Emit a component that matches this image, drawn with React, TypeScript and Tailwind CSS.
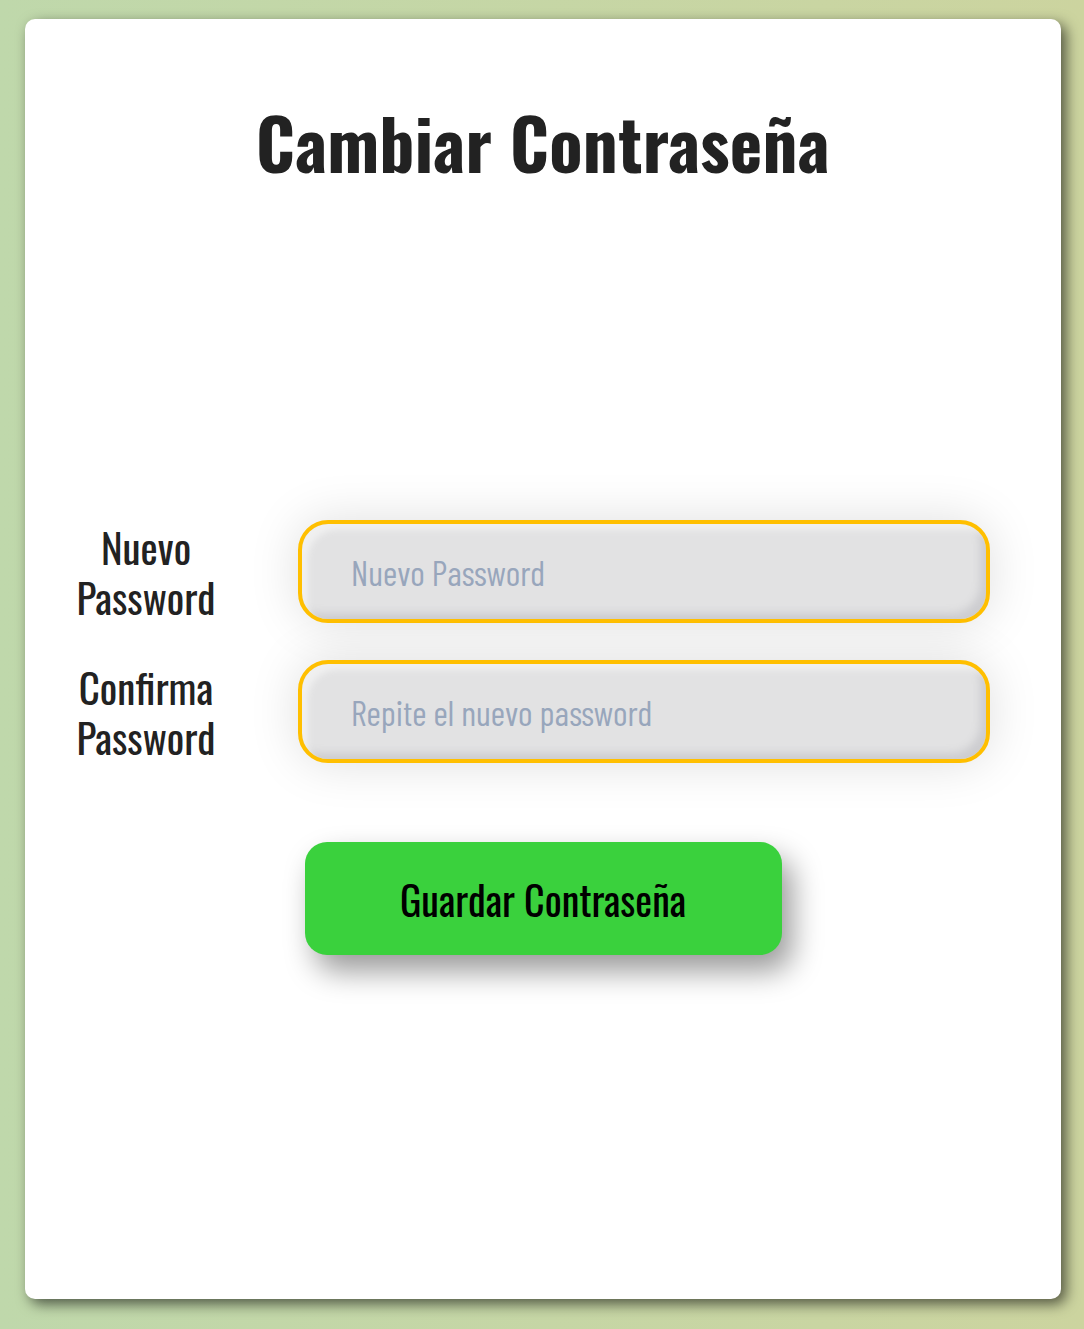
export default function App() {
  return (
    <div className="min-h-screen w-full bg-linear-to-r from-[#bfd8ab] to-[#ccd49f] pt-[19px] pl-[25px]">
      <div className="w-[1036px] h-[1280px] bg-white rounded-[10px] shadow-[5px_5px_14px_rgba(0,0,0,0.6)] flex flex-col items-center">
        <h1 className="mt-[78px] text-[69px] leading-[90px] font-bold text-[#222222] font-['Oswald',sans-serif] tracking-[0.3px]">
          Cambiar Contraseña
        </h1>

        <form className="mt-[333px] w-full flex flex-col gap-[37px]">
          <div className="flex items-center">
            <label className="ml-[48px] w-[146px] text-center text-[41px] leading-[50px] font-normal text-[#222222] font-['Oswald',sans-serif]">
              Nuevo
              <br />
              Password
            </label>
            <input
              type="password"
              placeholder="Nuevo Password"
              className="ml-[79px] w-[692px] h-[103px] rounded-[30px] border-[4.5px] border-[#ffbf00] bg-[#e2e2e3] pl-[49px] text-[35px] text-[#333] placeholder:text-[#98a6bc] font-['Barlow_Condensed',sans-serif] outline-none shadow-[inset_9px_9px_6px_-3px_#f0f0f0,inset_-9px_-9px_8px_-3px_#cdcdd0,0_0_50px_rgba(0,0,0,0.13)]"
            />
          </div>
          <div className="flex items-center">
            <label className="ml-[48px] w-[146px] text-center text-[41px] leading-[50px] font-normal text-[#222222] font-['Oswald',sans-serif]">
              Confirma
              <br />
              Password
            </label>
            <input
              type="password"
              placeholder="Repite el nuevo password"
              className="ml-[79px] w-[692px] h-[103px] rounded-[30px] border-[4.5px] border-[#ffbf00] bg-[#e2e2e3] pl-[49px] text-[35px] text-[#333] placeholder:text-[#98a6bc] font-['Barlow_Condensed',sans-serif] outline-none shadow-[inset_9px_9px_6px_-3px_#f0f0f0,inset_-9px_-9px_8px_-3px_#cdcdd0,0_0_50px_rgba(0,0,0,0.13)]"
            />
          </div>
          <div className="flex justify-center mt-[42px]">
            <button
              type="button"
              className="w-[477px] h-[113px] rounded-[22px] bg-[#3ad13d] text-black text-[40px] font-normal font-['Oswald',sans-serif] shadow-[10px_16px_30px_rgba(0,0,0,0.4)]"
            >
              Guardar Contraseña
            </button>
          </div>
        </form>
      </div>
    </div>
  );
}
